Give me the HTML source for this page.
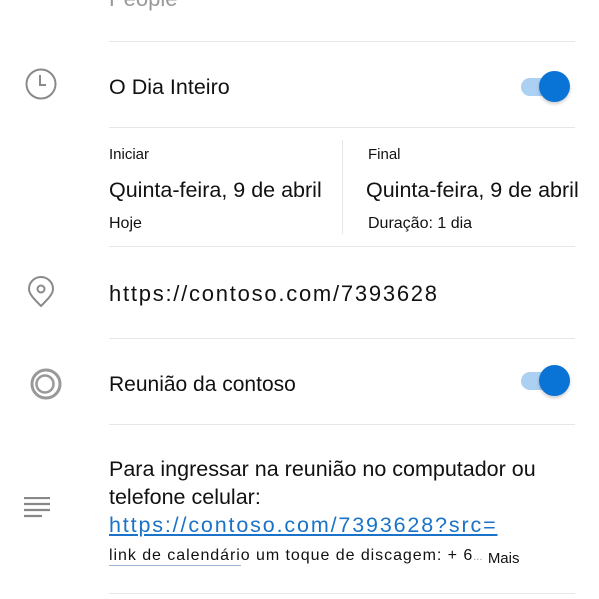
<!DOCTYPE html><html><head><style>
body{margin:0;width:599px;height:599px;overflow:hidden;background:#fff;font-family:"Liberation Sans",Arial,sans-serif;position:relative;color:#111}
.a{position:absolute;white-space:nowrap}
.hr{position:absolute;left:109px;width:466px;height:1px;background:#e6e6e6}
.tg{position:absolute;left:521px;width:40px;height:18px;border-radius:9px;background:#acd0f2}
.tg i{position:absolute;left:18px;top:-7px;width:31px;height:31px;border-radius:50%;background:#0a74d6;box-shadow:0 2px 3px rgba(0,0,0,.2)}
</style></head><body>
<div class="a" style="left:109px;top:-14px;font-size:22px;color:#999">People</div>
<svg class="a" style="left:25px;top:-10px" width="34" height="18"><path d="M2 0v4a4 4 0 004 4h10M20 8h6a4 4 0 004-4V0" stroke="#999" stroke-width="2" fill="none"/></svg>
<div class="hr" style="top:41px"></div>
<svg class="a" style="left:24px;top:67px" width="34" height="34"><circle cx="17" cy="17" r="14.5" stroke="#8a8a8a" stroke-width="2" fill="none"/><path d="M16 8v10h6" stroke="#8a8a8a" stroke-width="2" fill="none"/></svg>
<div class="a" style="left:109px;top:75px;font-size:21.5px">O Dia Inteiro</div>
<div class="tg" style="top:78px"><i></i></div>
<div class="hr" style="top:127px"></div>
<div class="a" style="left:109px;top:146px;font-size:15px">Iniciar</div>
<div class="a" style="left:109px;top:178px;font-size:21.5px">Quinta-feira, 9 de abril</div>
<div class="a" style="left:109px;top:215px;font-size:16px">Hoje</div>
<div class="a" style="left:342px;top:140px;width:1px;height:94px;background:#e6e6e6"></div>
<div class="a" style="left:368px;top:146px;font-size:15px">Final</div>
<div class="a" style="left:366px;top:178px;font-size:21.5px">Quinta-feira, 9 de abril</div>
<div class="a" style="left:368px;top:215px;font-size:16px">Duração: 1 dia</div>
<div class="hr" style="top:246px"></div>
<svg class="a" style="left:26px;top:276px" width="30" height="34"><path d="M15 30C8 23 3 18 3 13a12 12 0 0124 0c0 5-5 10-12 17z" stroke="#8a8a8a" stroke-width="2" fill="none" stroke-linejoin="round"/><circle cx="15" cy="13" r="3.5" stroke="#8a8a8a" stroke-width="2" fill="none"/></svg>
<div class="a" style="left:109px;top:281px;font-size:22px;letter-spacing:1.75px">https://contoso.com/7393628</div>
<div class="hr" style="top:338px"></div>
<svg class="a" style="left:29px;top:367px" width="34" height="34"><circle cx="17" cy="17" r="14" stroke="#999" stroke-width="3" fill="none"/><circle cx="16" cy="17" r="8.5" stroke="#999" stroke-width="2.5" fill="none"/></svg>
<div class="a" style="left:109px;top:373px;font-size:21px">Reunião da contoso</div>
<div class="tg" style="top:372px"><i></i></div>
<div class="hr" style="top:424px"></div>
<svg class="a" style="left:24px;top:497px" width="34" height="24"><path d="M0 1h26M0 7h26M0 13h26M0 19h18" stroke="#888" stroke-width="2.2"/></svg>
<div class="a" style="left:109px;top:455px;font-size:21.5px;line-height:28px">Para ingressar na reunião no computador ou<br>telefone celular:<br><span style="color:#1a73c8;text-decoration:underline;letter-spacing:1.85px">https://contoso.com/7393628?src=</span></div>
<div class="a" style="left:109px;top:547px;font-size:16px;letter-spacing:0.95px">link de calendário um toque de discagem: + 6<span style="color:#999;font-size:11px;letter-spacing:0">...</span> <span style="font-size:15px;position:relative;top:3px;letter-spacing:0">Mais</span></div>
<div class="a" style="left:109px;top:565px;width:132px;height:1px;background:#9cb8d8"></div>
<div class="hr" style="top:593px"></div>
</body></html>
